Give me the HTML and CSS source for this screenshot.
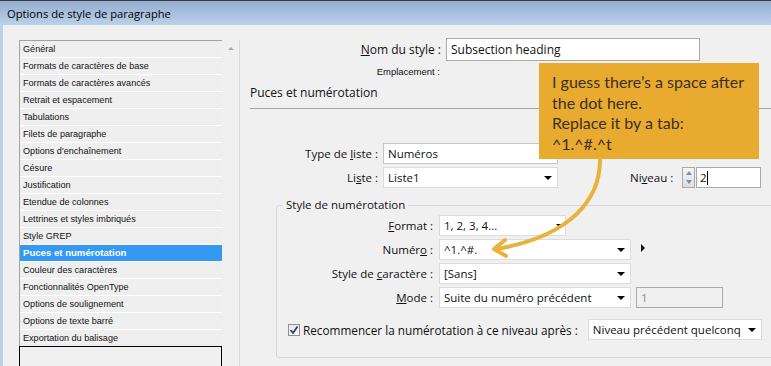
FILE: index.html
```html
<!DOCTYPE html>
<html>
<head>
	<title>Options de style de paragraphe</title>
	<meta charset="utf-8">
	<link rel="stylesheet" href="styles.css">
</head>
<body>
	<div class="titlebar">Options de style de paragraphe</div>
	<div class="window">
		<div class="sidebar">
			<div class="listwrap">
				<div class="list">
					<div class="item">Général</div>
					<div class="item">Formats de caractères de base</div>
					<div class="item">Formats de caractères avancés</div>
					<div class="item">Retrait et espacement</div>
					<div class="item">Tabulations</div>
					<div class="item">Filets de paragraphe</div>
					<div class="item">Options d'enchaînement</div>
					<div class="item">Césure</div>
					<div class="item">Justification</div>
					<div class="item">Etendue de colonnes</div>
					<div class="item">Lettrines et styles imbriqués</div>
					<div class="item">Style GREP</div>
					<div class="item selected">Puces et numérotation</div>
					<div class="item">Couleur des caractères</div>
					<div class="item">Fonctionnalités OpenType</div>
					<div class="item">Options de soulignement</div>
					<div class="item">Options de texte barré</div>
					<div class="item">Exportation du balisage</div>
					<div class="preview"></div>
				</div>
				<div class="scroll"><span class="up"></span></div>
			</div>
		</div>

		<div class="main">
			<div class="row name-row">
				<div class="label name-label"><u>N</u>om du style :</div>
				<div class="field name-field">Subsection heading</div>
			</div>
			<div class="location">Emplacement :</div>
			<div class="section">Puces et numérotation</div>

			<div class="row list-type">
				<div class="label top-label">Type de <u>l</u>iste :</div>
				<div class="field top-field">Numéros</div>
			</div>
			<div class="row list-name">
				<div class="label top-label">Li<u>s</u>te :</div>
				<div class="field top-field select">Liste1<span class="arrow"></span></div>
				<div class="label level-label">Ni<u>v</u>eau :</div>
				<div class="spinner"><span class="spin-up"></span><span class="spin-down"></span></div>
				<div class="field level-field">2<span class="caret"></span></div>
			</div>

			<fieldset class="numbering">
				<legend>Style de numérotation</legend>
				<div class="row num-row">
					<div class="label num-label"><u>F</u>ormat :</div>
					<div class="field select format-field">1, 2, 3, 4...<span class="arrow small"></span></div>
				</div>
				<div class="row num-row">
					<div class="label num-label">Numér<u>o</u> :</div>
					<div class="field select num-field">^1.^#.<span class="arrow"></span></div>
					<span class="flyout"></span>
				</div>
				<div class="row num-row gap4">
					<div class="label num-label">Style de <u>c</u>aractère :</div>
					<div class="field select num-field">[Sans]<span class="arrow"></span></div>
				</div>
				<div class="row num-row">
					<div class="label num-label"><u>M</u>ode :</div>
					<div class="field select num-field">Suite du numéro précédent<span class="arrow"></span></div>
					<div class="field disabled">1</div>
				</div>
				<div class="row check-row">
					<span class="checkbox">
						<svg width="10" height="10" viewBox="0 0 10 10"><path d="M1.5 5 L4 8 L8.5 1.5" fill="none" stroke="#2b3f75" stroke-width="1.8"/></svg>
					</span>
					<span class="check-text">Recommencer la numérotation à ce niveau après :</span>
					<div class="field select after-field">Niveau précédent quelconq<span class="arrow"></span></div>
				</div>
			</fieldset>
		</div>
	</div>

	<div class="callout">I guess there’s a space after<br>the dot here.<br>Replace it by a tab:<br>^1.^#.^t</div>
	<svg class="pointer" width="140" height="110" viewBox="480 155 140 110">
		<path d="M600 158 C601 200 570 236 497 249" fill="none" stroke="#e9b23a" stroke-width="4" stroke-linecap="round"/>
		<path d="M505 240 L494 249 L506 256" fill="none" stroke="#e9b23a" stroke-width="4" stroke-linecap="round" stroke-linejoin="round"/>
	</svg>
</body>
</html>
```

FILE: styles.css
```css
*{
	box-sizing: border-box;
}
body{
	margin: 0;
	width: 771px;
	height: 366px;
	overflow: hidden;
	position: relative;
	background-color: #f0f0f0;
	font-family: "Open Sans", "Liberation Sans", sans-serif;
	font-size: 11.5px;
	color: #111;
}
.titlebar{
	height: 25px;
	border-top: 1px solid #3a3a3a;
	background: linear-gradient(#95adcf, #b9d1ea);
	padding-left: 7px;
	line-height: 25px;
	font-size: 11.2px;
	color: #000;
}
.window{
	display: flex;
	height: 341px;
	overflow: hidden;
	border-left: 3px solid #bcd1ea;
}

/* left list */
.sidebar{
	width: 237px;
	padding: 15px 0 0 16px;
}
.listwrap{
	display: flex;
	height: 326px;
}
.list{
	width: 203px;
	border-left: 1px solid #a3a3a3;
	border-top: 1px solid #a3a3a3;
	font-family: "Liberation Sans", sans-serif;
	font-size: 9.1px;
}
.item{
	height: 17px;
	line-height: 16px;
	padding-left: 3px;
	border-bottom: 1px solid #fff;
	background-color: #efefef;
	white-space: nowrap;
}
.selected{
	background-color: #3399f3;
	color: #fff;
	font-weight: bold;
	font-size: 9.6px;
}
.preview{
	height: 30px;
	border: 1px solid #000;
	margin-top: -1px;
	margin-left: -1px;
}
.scroll{
	width: 18px;
	border-right: 1px solid #dadada;
	display: flex;
	justify-content: center;
	padding-top: 7px;
}
.up{
	width: 0;
	height: 0;
	border-left: 3px solid transparent;
	border-right: 3px solid transparent;
	border-bottom: 3px solid #a8a8a8;
}

/* right side */
.main{
	flex: 1;
	padding-left: 10px;
}
.row{
	display: flex;
	align-items: center;
}
.label{
	text-align: right;
	white-space: nowrap;
}
.field{
	background-color: #fff;
	border: 1px solid #c6c6c6;
	height: 21px;
	line-height: 19px;
	padding-left: 4px;
	white-space: nowrap;
	overflow: hidden;
}
.select{
	display: flex;
	justify-content: space-between;
	align-items: center;
	padding-right: 5px;
	border-color: #dcdcdc;
}
.arrow{
	width: 0;
	height: 0;
	border-left: 4px solid transparent;
	border-right: 4px solid transparent;
	border-top: 4px solid #000;
}
.arrow.small{
	border-left-width: 3px;
	border-right-width: 3px;
	border-top-width: 3px;
}
.name-row{
	margin-top: 13px;
}
.name-label{
	width: 191px;
	font-size: 12px;
}
.name-field{
	width: 254px;
	height: 23px;
	line-height: 21px;
	margin-left: 5px;
	border-color: #a9a9a9;
	font-size: 12px;
}
.location{
	width: 190px;
	height: 22px;
	line-height: 22px;
	text-align: right;
	font-family: "Liberation Sans", sans-serif;
	font-size: 9.5px;
}
.section{
	height: 26px;
	line-height: 20px;
	font-size: 12px;
	border-bottom: 1px solid #a5a5a5;
	margin-right: -10px;
}
.list-type{
	margin-top: 34px;
}
.list-name{
	margin-top: 3px;
}
.top-label{
	width: 128px;
}
.top-field{
	width: 175px;
	margin-left: 5px;
}
.level-label{
	margin-left: 72px;
	width: 43px;
}
.spinner{
	margin-left: 9px;
	width: 13px;
	height: 21px;
	border: 1px solid #a9a9a9;
	background: linear-gradient(#f6f6f6, #dedede);
	display: flex;
	flex-direction: column;
	align-items: center;
	justify-content: space-around;
}
.spin-up{
	border-left: 3px solid transparent;
	border-right: 3px solid transparent;
	border-bottom: 4px solid #7d8fae;
}
.spin-down{
	border-left: 3px solid transparent;
	border-right: 3px solid transparent;
	border-top: 4px solid #7d8fae;
}
.level-field{
	width: 65px;
	margin-left: 1px;
	border-color: #a9a9a9;
	padding-left: 3px;
	display: flex;
	align-items: center;
}
.caret{
	width: 1px;
	height: 14px;
	background-color: #000;
}

/* numbering group */
.numbering{
	margin: 9px 0 0 26px;
	width: 520px;
	padding: 2px 0 17px 0;
	border: 1px solid #d4d9de;
	border-radius: 3px;
}
.numbering legend{
	margin-left: 6px;
	padding: 0 3px;
	font-size: 11.5px;
	line-height: 16px;
}
.num-row{
	margin-bottom: 3px;
}
.gap4{
	margin-top: 1px;
}
.num-label{
	width: 156px;
}
.format-field{
	width: 127px;
	margin-left: 6px;
	padding-right: 3px;
}
.num-field{
	width: 192px;
	margin-left: 6px;
}
.flyout{
	margin-left: 10px;
	margin-top: -4px;
	width: 0;
	height: 0;
	border-top: 4px solid transparent;
	border-bottom: 4px solid transparent;
	border-left: 4px solid #111;
}
.disabled{
	width: 87px;
	margin-left: 5px;
	background-color: #f0f0f0;
	border-color: #a9a9a9;
	color: #8c8c8c;
}
.check-row{
	margin-top: 11px;
}
.checkbox{
	margin-left: 11px;
	width: 12px;
	height: 12px;
	border: 1px solid #8f8f8f;
	background: linear-gradient(#e9e9e9, #fbfbfb);
	display: flex;
	align-items: center;
	justify-content: center;
}
.check-text{
	margin-left: 3px;
	font-size: 11.75px;
}
.after-field{
	width: 174px;
	margin-left: 10px;
}

/* annotation */
.callout{
	position: absolute;
	left: 539px;
	top: 63px;
	width: 220px;
	height: 96px;
	padding: 9px 0 0 13px;
	background-color: #e9ab2f;
	color: #3a3020;
	font-family: Lato, "Open Sans", sans-serif;
	font-size: 16px;
	line-height: 20.5px;
}
.pointer{
	position: absolute;
	left: 480px;
	top: 155px;
}
```
